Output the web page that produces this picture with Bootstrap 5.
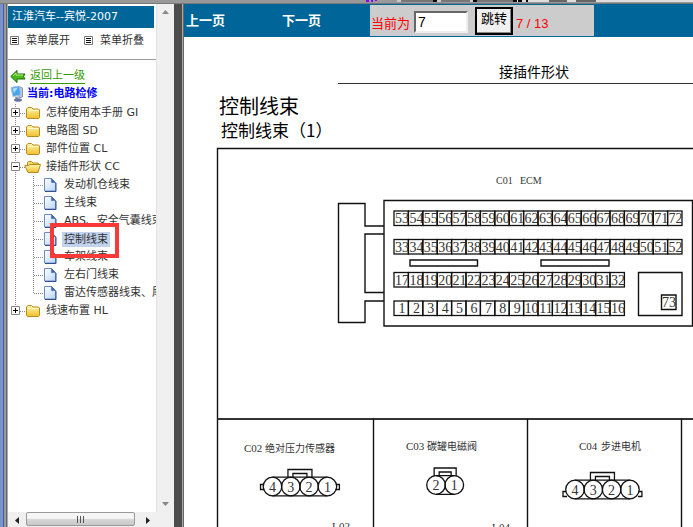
<!DOCTYPE html>
<html lang="zh-CN">
<head>
<meta charset="utf-8">
<meta name="viewport" content="width=device-width, initial-scale=1">
<title>江淮汽车--宾悦-2007</title>
<link href="https://cdn.jsdelivr.net/npm/bootstrap@5.3.0/dist/css/bootstrap.min.css" rel="stylesheet">
<style>
body{font-family:"DejaVu Sans","Noto Sans CJK SC",sans-serif;font-size:11px;line-height:18px;color:#333;background:#fff}
svg{display:block;flex:none}
.top-strip{height:4px;background:#999;border-bottom:1px solid #777}
.win-edge{width:8px;background:linear-gradient(90deg,#7b92c8 0 3px,#3f5fae 3px 4px,#999 4px 6px,#666 6px 7px,#aaa 7px 8px)}
.side{width:166px}
.side-view{min-width:0}
.book-title{background:#069;color:#fff;height:22px;line-height:22px;padding-left:4px;margin:2px 2px 0 0}
.tools{height:32px;padding:0 0 6px 2px;gap:14px;border-bottom:1px solid #999}
.tools button{gap:7px}
.plain{background:none;border:0;padding:0;color:inherit}
.links{padding:8px 0 0 2px}
.back-link{color:#390;line-height:15px;border-bottom:1px solid #390;text-decoration:none}
.current{color:#00f;height:20px}
.tree,.tree ul{list-style:none;margin:0;padding:0}
.tree a{color:#333;text-decoration:none;white-space:nowrap}
.node{height:18px}
.node svg+svg{margin-left:-2px}
.node a{margin-left:4px}
.kids{background:repeating-linear-gradient(#888 0 1px,transparent 1px 2px) 7px 0/1px 100% no-repeat}
.tree .kids ul{padding-left:18px}
.tree .node a.picked{background:#c1d2ee;padding:0 2px;margin-left:2px;line-height:15px}
.marker{top:-7px;width:69px;height:35px;border:4px solid #f93838;pointer-events:none}
.vbar{width:18px;background:#f0f0f0;border-left:1px solid #e4e4e4}
.vbar button,.hbar button{height:16px;width:17px;display:flex;align-items:center;justify-content:center}
.hbar{height:15px;background:#f0f0f0;padding-right:18px}
.thumb{border:1px solid #999;border-radius:2px;background:linear-gradient(#f5f5f5 0 45%,#d8d8d8 50%,#c8c8c8);height:14px;margin:0 4px 0 1px}
.splitter{width:8px;background:#4c4c4c}
.main-edge{width:2px;background:linear-gradient(90deg,#aaa 50%,#666 50%)}
.bar{background:#069;height:33px;padding-left:2px;font-family:"Liberation Sans","Noto Sans CJK SC",sans-serif;font-size:13px}
.bar a{color:#fff;text-decoration:none;font-weight:700;width:96px}
.pager{background:#ccc;color:#f00;width:224px;height:31px;margin-left:-8px;padding-left:1px}
.pager label,.pager output{padding-top:7px}
.pager input{width:54px;height:22px;margin:2px 7px 0 4px;padding:0 2px;border:2px solid;border-color:#666 #eee #eee #666;border-radius:0;font:14px "Liberation Sans",sans-serif;color:#000}
.pager button{width:38px;height:28px;border:2px solid #000;border-radius:0;padding:0 0 3px;background:#f0f0f0;font-size:13px;color:#000;margin-right:3px;box-shadow:inset -1px -1px #888}
.sheet{font-family:"Noto Sans CJK SC",sans-serif;color:#000}
.chapter{font-size:14px;line-height:20px;margin:24px 0 0 154px;padding:0 0 2px 161px;border-bottom:1px solid #333;font-weight:400}
.sect{font-size:20px;line-height:24px;margin:10px 0 0 35px;font-weight:400}
.subsect{font-size:17px;line-height:24px;margin:0 0 5px 37px;font-weight:400}
.drawing{width:100%;height:auto}
.drawing text{font-family:"Liberation Serif","Noto Sans CJK SC",serif;fill:#333}
</style>
<script src="https://cdn.jsdelivr.net/npm/bootstrap@5.3.0/dist/js/bootstrap.bundle.min.js"></script>
</head>
<body class="vh-100 overflow-hidden d-flex flex-column">
<svg width="0" height="0" class="position-absolute" aria-hidden="true">
<defs>
<linearGradient id="gold" x2="0" y2="1"><stop stop-color="#fff5a8"/><stop offset="1" stop-color="#f0c030"/></linearGradient>
<linearGradient id="paper" x2="1" y2="1"><stop stop-color="#fff"/><stop offset="1" stop-color="#b8d4f8"/></linearGradient>
<symbol id="i-list" viewBox="0 0 9 9"><path d="M.5.5h8v8h-8z" fill="#fff" stroke="#777"/><path d="M2 2.500h5M2 4.500h5M2 6.500h5" stroke="#111"/></symbol>
<symbol id="i-plus" viewBox="0 0 18 18"><path d="M7.500 0v18M12 9.500h6" stroke="#888" stroke-dasharray="1 1"/><path d="M3.500 4.500h8v8h-8z" fill="#fff" stroke="#888"/><path d="M5 8.500h5M7.500 6v5" stroke="#000"/></symbol>
<symbol id="i-last" viewBox="0 0 18 18"><path d="M7.500 0v5M12 9.500h6" stroke="#888" stroke-dasharray="1 1"/><path d="M3.500 4.500h8v8h-8z" fill="#fff" stroke="#888"/><path d="M5 8.500h5M7.500 6v5" stroke="#000"/></symbol>
<symbol id="i-minus" viewBox="0 0 18 18"><path d="M7.500 0v18M12 9.500h6" stroke="#888" stroke-dasharray="1 1"/><path d="M3.500 4.500h8v8h-8z" fill="#fff" stroke="#888"/><path d="M5 8.500h5" stroke="#000"/></symbol>
<symbol id="i-join" viewBox="0 0 18 18"><path d="M7.500 0v18M8 9.500h10" stroke="#888" stroke-dasharray="1 1"/></symbol>
<symbol id="i-end" viewBox="0 0 18 18"><path d="M7.500 0v10M8 9.500h10" stroke="#888" stroke-dasharray="1 1"/></symbol>
<symbol id="i-folder" viewBox="0 0 18 18"><path d="M2.500 13.500V5l1.500-1.500h3.500L9 5h5.500l1 1v7.500l-1 1h-11z" fill="url(#gold)" stroke="#b98a1c"/><path d="M4 6.500h10.500" stroke="#fffbd0"/></symbol>
<symbol id="i-open" viewBox="0 0 18 18"><path d="M3.500 13V4.500l1-1h3L9 5h5l.5 1v7" fill="#f6d860" stroke="#b98a1c"/><path d="M.8 7.500h4L6 6.500h10.500L14 14.500H4z" fill="url(#gold)" stroke="#b98a1c"/></symbol>
<symbol id="i-page" viewBox="0 0 18 18"><path d="M2.500 2.500h7l4 4v8.500h-11z" fill="url(#paper)" stroke="#6c8cc4"/><path d="M9.500 2.500v4h4z" fill="#3f65ae" stroke="#3f65ae" stroke-width=".6"/><path d="M3 15.500h11V7" fill="none" stroke="#33508c"/></symbol>
</defs>
</svg>

<div class="top-strip flex-shrink-0">
<svg width="693" height="3" aria-hidden="true"><path d="M366 0h3v2h-3zM371 0h2v2h-2zM375 0h2v1h-2z" fill="#80f"/><path d="M401 0h150v2h-150z" fill="#777"/><path d="M397 0h4v2h-4zM437 0h4v2h-4zM470 0h4v2h-4z" fill="#ccc"/><path d="M433 0h4v2h-4zM473 0h4v2h-4zM513 0h4v2h-4z" fill="#000"/><path d="M517 0h176v2H517z" fill="#ddd"/><path d="M518 0h4v2h-4zM526 0h2v2h-2z" fill="#000"/><path d="M549 0h18v2h-18zM576 0h20v2h-20z" fill="#666"/></svg>
</div>

<div class="d-flex flex-grow-1 overflow-hidden">
<div class="win-edge flex-shrink-0"></div>

<aside class="side d-flex flex-column flex-shrink-0">
  <div class="d-flex flex-grow-1 overflow-hidden">
    <div class="side-view flex-grow-1 overflow-hidden">
      <div class="book-title">江淮汽车--宾悦-2007</div>
      <div class="tools d-flex align-items-center">
        <button type="button" class="plain d-flex align-items-center text-nowrap"><svg width="9" height="9"><use href="#i-list"/></svg>菜单展开</button>
        <button type="button" class="plain d-flex align-items-center text-nowrap"><svg width="9" height="9"><use href="#i-list"/></svg>菜单折叠</button>
      </div>
      <div class="links">
        <div class="d-flex align-items-center gap-1">
          <svg width="16" height="14" viewBox="0 0 16 14"><path d="M.8 7.500 7 1.500v3.500h8l-1.500 2.500L15 10H7v3.500z" fill="#4cbb17" stroke="#176b08"/><path d="M3 7 6 4v2h7" fill="none" stroke="#b8f080"/></svg>
          <a class="back-link" href="#">返回上一级</a>
        </div>
        <div class="current d-flex align-items-center fw-bold">
          <svg width="17" height="18" viewBox="0 0 17 18"><path d="M9 1.500 12.500 3v9L9 13z" fill="#b8c8dc" stroke="#8797ad"/><path d="M1 2.500 9.500 1l1 9L3 11.500z" fill="#45a5f0" stroke="#a8bbd2"/><path d="M2.500 3.500 8 2.500 4 8z" fill="#a9dcff"/><path d="m5 12 3-.5.5 2.500-3 .5z" fill="#8b9cb4"/><ellipse cx="8" cy="15" rx="4" ry="1.800" fill="#6677a5"/></svg>
          <span>当前:电路检修</span>
        </div>
      </div>
      <ul class="tree">
        <li class="node d-flex align-items-center"><svg width="18" height="18"><use href="#i-plus"/></svg><svg width="18" height="18"><use href="#i-folder"/></svg><a href="#">怎样使用本手册 GI</a></li>
        <li class="node d-flex align-items-center"><svg width="18" height="18"><use href="#i-plus"/></svg><svg width="18" height="18"><use href="#i-folder"/></svg><a href="#">电路图 SD</a></li>
        <li class="node d-flex align-items-center"><svg width="18" height="18"><use href="#i-plus"/></svg><svg width="18" height="18"><use href="#i-folder"/></svg><a href="#">部件位置 CL</a></li>
        <li class="kids">
          <div class="node d-flex align-items-center"><svg width="18" height="18"><use href="#i-minus"/></svg><svg width="18" height="18"><use href="#i-open"/></svg><a href="#">接插件形状 CC</a></div>
          <ul>
            <li class="node d-flex align-items-center"><svg width="18" height="18"><use href="#i-join"/></svg><svg width="18" height="18"><use href="#i-page"/></svg><a href="#">发动机仓线束</a></li>
            <li class="node d-flex align-items-center"><svg width="18" height="18"><use href="#i-join"/></svg><svg width="18" height="18"><use href="#i-page"/></svg><a href="#">主线束</a></li>
            <li class="node d-flex align-items-center"><svg width="18" height="18"><use href="#i-join"/></svg><svg width="18" height="18"><use href="#i-page"/></svg><a href="#">ABS、安全气囊线束</a></li>
            <li class="node d-flex align-items-center position-relative"><svg width="18" height="18"><use href="#i-join"/></svg><svg width="18" height="18"><use href="#i-page"/></svg><a class="picked" href="#">控制线束</a><span class="marker position-absolute start-0 ms-4 z-1"></span></li>
            <li class="node d-flex align-items-center"><svg width="18" height="18"><use href="#i-join"/></svg><svg width="18" height="18"><use href="#i-page"/></svg><a href="#">车架线束</a></li>
            <li class="node d-flex align-items-center"><svg width="18" height="18"><use href="#i-join"/></svg><svg width="18" height="18"><use href="#i-page"/></svg><a href="#">左右门线束</a></li>
            <li class="node d-flex align-items-center"><svg width="18" height="18"><use href="#i-end"/></svg><svg width="18" height="18"><use href="#i-page"/></svg><a href="#">雷达传感器线束、尾</a></li>
          </ul>
        </li>
        <li class="node d-flex align-items-center"><svg width="18" height="18"><use href="#i-last"/></svg><svg width="18" height="18"><use href="#i-folder"/></svg><a href="#">线速布置 HL</a></li>
      </ul>
    </div>
    <div class="vbar d-flex flex-column justify-content-between flex-shrink-0">
      <button type="button" class="plain" aria-label="向上滚动"><svg width="7" height="4"><path d="M0 4 3.500 0 7 4z" fill="#888"/></svg></button>
      <button type="button" class="plain" aria-label="向下滚动"><svg width="7" height="4"><path d="M0 0h7L3.500 4z" fill="#888"/></svg></button>
    </div>
  </div>
  <div class="hbar d-flex flex-shrink-0">
    <button type="button" class="plain" aria-label="向左滚动"><svg width="4" height="7"><path d="M4 0v7L0 3.500z" fill="#222"/></svg></button>
    <div class="thumb flex-grow-1 d-flex align-items-center justify-content-center"><svg width="8" height="7"><path d="M.5 0v7M3.500 0v7M6.500 0v7" stroke="#555"/></svg></div>
    <button type="button" class="plain" aria-label="向右滚动"><svg width="4" height="7"><path d="M0 0v7l4-3.500z" fill="#222"/></svg></button>
  </div>
</aside>

<div class="splitter flex-shrink-0"></div>
<div class="main-edge flex-shrink-0"></div>

<main class="flex-grow-1 overflow-hidden">
  <nav class="bar d-flex align-items-center text-nowrap">
    <a href="#">上一页</a>
    <a href="#">下一页</a>
    <form class="pager d-flex align-items-center">
      <label for="pg">当前为</label>
      <input id="pg" type="text" value="7">
      <button type="button">跳转</button>
      <output>7 / 13</output>
    </form>
  </nav>
  <article class="sheet">
    <h1 class="chapter">接插件形状</h1>
    <h2 class="sect">控制线束</h2>
    <h3 class="subsect">控制线束（1）</h3>
    <svg class="drawing" viewBox="184 147 509 381" role="img" aria-label="接插件形状">
      <g fill="none" stroke="#111" stroke-width="1.400">
        <path d="M217.500 528V148.500H693"/>
        <path d="M217.500 419H693" stroke="#333" stroke-width="2"/>
        <path d="M373.500 419v109M527.500 419v109M681.500 419v109"/>
        <path d="M384 226h-19v-22.500h-26.500v119H365V301h19M384 234h-19v58.500h19"/>
        <path d="M384 200.500h308.500V326H384z"/>
        <path d="M410 260h67.500v6H410zM541 260h68v6h-68zM638.500 272.500H682v43h-43.500zM661.500 295H676v14.500h-14.500z"/>
      </g>
      <g id="pins" fill="none" stroke="#111" stroke-width="1.300"></g>
      <g id="plugs" fill="none" stroke="#111" stroke-width="1.300"></g>
      <g font-size="11">
        <text x="496" y="184" font-size="10">C01</text><text x="520" y="184" font-size="10">ECM</text>
        <text x="244" y="452">C02</text><text x="265" y="452" font-size="10">绝对压力传感器</text>
        <text x="406" y="450">C03</text><text x="427" y="450" font-size="10">碳罐电磁阀</text>
        <text x="579" y="450">C04</text><text x="601" y="450" font-size="10">步进电机</text>
        <text x="331" y="530">J-02</text><text x="491" y="531">J-04</text>
        <text x="662" y="307" font-size="14">73</text>
      </g>
    </svg>
  </article>
</main>
</div>

<script>
const NS = 'http://www.w3.org/2000/svg';
function add(parent, tag, attrs, text) {
  const el = document.createElementNS(NS, tag);
  for (const k in attrs) el.setAttribute(k, attrs[k]);
  if (text !== undefined) el.textContent = text;
  parent.appendChild(el);
}
// Rows of ECM pins: first number, count, top edge
const pins = document.getElementById('pins');
[[53, 20, 211], [33, 20, 239.5], [17, 16, 272.5], [1, 16, 301]].forEach(([first, count, y]) => {
  const pitch = 14.4;
  for (let i = 0; i < count; i++) {
    const x = 394 + i * pitch;
    add(pins, 'rect', {x, y, width: pitch, height: 14.5});
    add(pins, 'text', {x: x + 8, y: y + 12, 'font-size': 14, 'text-anchor': 'middle', stroke: 'none'}, first + i);
  }
});
// Round-pin plugs: centre of the left pin, pin count, side lugs, lug drop
const plugs = document.getElementById('plugs');
[[272.5, 486.5, 4, true, 0], [436, 485, 2, false, 0], [575, 489.5, 4, true, 4]].forEach(([x, y, n, lugs, drop]) => {
  const end = x + (n - 1) * 18.3, mid = (x + end) / 2, w = n === 4 ? 12 : 11;
  add(plugs, 'path', {d: `M${x} ${y - 9.3}H${end}M${x} ${y + 9.3}H${end}`});
  add(plugs, 'path', {d: `M${mid - w} ${y - 9}v-8h${2 * w}v8M${mid - w + 5} ${y - 9}v-4h${2 * w - 10}v4`});
  if (lugs) add(plugs, 'path', {d: `M${x - 9} ${y - 2 + drop}h-3v5h4M${end + 9} ${y - 2 + drop}h3v5h-4`});
  for (let i = 0; i < n; i++) {
    const cx = x + i * 18.3;
    add(plugs, 'circle', {cx, cy: y, r: 9.3});
    add(plugs, 'text', {x: cx, y: y + 5, 'font-size': 14, 'text-anchor': 'middle', stroke: 'none'}, n - i);
  }
});
</script>
</body>
</html>
